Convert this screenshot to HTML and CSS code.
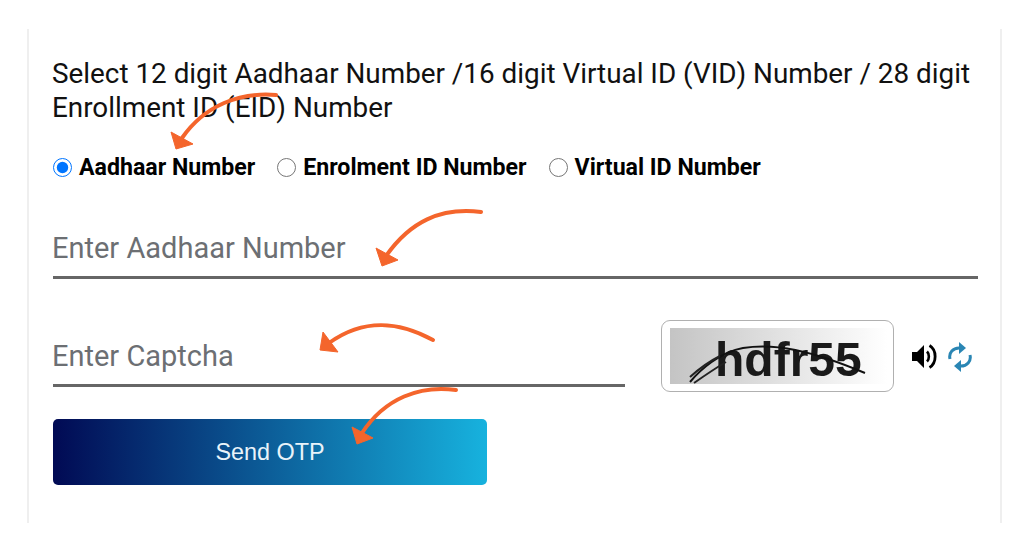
FILE: index.html
```html
<!DOCTYPE html>
<html lang="en">
<head>
    <meta charset="UTF-8">
    <meta name="viewport" content="width=device-width, initial-scale=1.0">
    <title>Aadhaar - Send OTP</title>
    <link rel="stylesheet" href="styles.css">
</head>
<body>
    <div class="panel">
        <p class="title">Select 12 digit Aadhaar Number /16 digit Virtual ID (VID) Number / 28 digit Enrollment ID (EID) Number</p>

        <div class="radio-row">
            <label class="radio-item"><input type="radio" name="idType" checked>Aadhaar Number</label>
            <label class="radio-item"><input type="radio" name="idType">Enrolment ID Number</label>
            <label class="radio-item"><input type="radio" name="idType">Virtual ID Number</label>
        </div>

        <input class="line-input aadhaar-input" type="text" placeholder="Enter Aadhaar Number">

        <div class="captcha-row">
            <input class="line-input captcha-input" type="text" placeholder="Enter Captcha">
            <div class="captcha-box">
                <div class="captcha-img">
                    <span class="captcha-text">hdfr55</span>
                    <svg class="captcha-lines" viewBox="0 0 217 56">
                        <path d="M20 54C30 42 50 24 73 20C105 15 140 22 195 45" fill="none" stroke="#111" stroke-width="2"/>
                        <path d="M20 49C30 40 40 33 50 28M24 55C34 48 44 41 56 34" fill="none" stroke="#222" stroke-width="2"/>
                    </svg>
                </div>
            </div>
            <!-- sound icon -->
            <svg class="sound-icon" viewBox="0 0 26 25">
                <path d="M0 8H5L12 1V24L5 17H0Z" fill="#000"/>
                <path d="M15 7.5C17.5 10 17.5 15 15 17.5" fill="none" stroke="#000" stroke-width="2.6"/>
                <path d="M17.5 1.5C25 6 25 19 17.5 23.5" fill="none" stroke="#000" stroke-width="2.8"/>
            </svg>
            <!-- reload icon -->
            <svg class="reload-icon" viewBox="0 0 24 30">
                <path d="M2 17C0.5 11 5 5.5 12 6" fill="none" stroke="#2a86b4" stroke-width="3"/>
                <path d="M11 0L18 6L11 12Z" fill="#2a86b4"/>
                <path d="M22 13C23.5 19 19 24.5 12 24" fill="none" stroke="#2a86b4" stroke-width="3"/>
                <path d="M13 18L6 24L13 30Z" fill="#2a86b4"/>
            </svg>
        </div>

        <button class="submit-btn" type="button">Send OTP</button>
    </div>

    <!-- orange arrows drawn over the form -->
    <svg class="arrows" viewBox="0 0 1024 554">
        <path d="M276 95C240 92 205 105 182 138" class="arrow-line"/>
        <path d="M171 132L193 144L176 149Z" class="arrow-head"/>
        <path d="M481 212C440 207 410 222 386 256" class="arrow-line"/>
        <path d="M376 248L398 260L382 266Z" class="arrow-head"/>
        <path d="M433 340C400 322 365 317 329 343" class="arrow-line"/>
        <path d="M323 332L320 350L338 352Z" class="arrow-head"/>
        <path d="M456 390C420 385 385 398 362 433" class="arrow-line"/>
        <path d="M352 427L373 438L357 444Z" class="arrow-head"/>
    </svg>
</body>
</html>
```

FILE: styles.css
```css
* {
    margin: 0;
    padding: 0;
    box-sizing: border-box;
}

body {
    font-family: Roboto, "Liberation Sans", sans-serif;
    background-color: #fff;
    color: #111;
    overflow: hidden;
}

.panel {
    width: 975px;
    height: 494px;
    margin: 29px 0 0 27px;
    padding: 28px 24px 0 24px;
    border-left: 2px solid #efefef;
    border-right: 2px solid #efefef;
}

.title {
    margin-left: -1px;
    font-size: 27.85px;
    line-height: 33.5px;
}

.radio-row {
    display: flex;
    gap: 22px;
    margin-top: 27px;
    height: 32px;
}

.radio-item {
    display: flex;
    align-items: center;
    gap: 7px;
    font-size: 23.15px;
    font-weight: 700;
    color: #000;
}

.radio-item input {
    width: 19px;
    height: 19px;
}

.line-input {
    display: block;
    height: 68px;
    border: none;
    border-bottom: 3px solid #666;
    outline: none;
    font-family: inherit;
    font-size: 29px;
    text-indent: -1px;
    background: transparent;
}

.line-input::placeholder {
    color: #6c6f73;
    opacity: 1;
}

.aadhaar-input {
    width: 925px;
    margin-top: 28px;
    padding-top: 8px;
}

.captcha-row {
    display: flex;
    align-items: flex-start;
    margin-top: 41px;
}

.captcha-input {
    width: 572px;
    margin-top: -1px;
    padding-top: 8px;
}

.captcha-box {
    width: 233px;
    height: 72px;
    margin-left: 36px;
    padding: 7px 8px;
    border: 1px solid #b0b0b0;
    border-radius: 9px;
}

.captcha-img {
    position: relative;
    width: 217px;
    height: 56px;
    background: linear-gradient(to right, #c4c4c4, #fff);
    filter: blur(0.7px);
}

.captcha-text {
    position: absolute;
    left: 45px;
    top: 12px;
    font-family: "Liberation Sans", sans-serif;
    font-size: 48px;
    line-height: 40px;
    font-weight: 700;
    color: #1a1a1a;
}

.captcha-lines {
    position: absolute;
    left: 0;
    top: 0;
    width: 217px;
    height: 56px;
}

.sound-icon {
    width: 26px;
    height: 25px;
    margin: 24px 0 0 18px;
}

.reload-icon {
    width: 24px;
    height: 30px;
    margin: 22px 0 0 10px;
}

.submit-btn {
    display: block;
    width: 434px;
    height: 66px;
    margin-top: 27px;
    border: none;
    border-radius: 5px;
    background: linear-gradient(to right, #010a54, #17b2de);
    color: #e9f3fa;
    font-family: "Liberation Sans", sans-serif;
    font-size: 23.4px;
}

.arrows {
    position: absolute;
    left: 0;
    top: 0;
    width: 1024px;
    height: 554px;
    pointer-events: none;
}

.arrow-line {
    fill: none;
    stroke: #f4652c;
    stroke-width: 4;
    stroke-linecap: round;
}

.arrow-head {
    fill: #f4652c;
    stroke: #f4652c;
    stroke-width: 1;
    stroke-linejoin: round;
}
```
